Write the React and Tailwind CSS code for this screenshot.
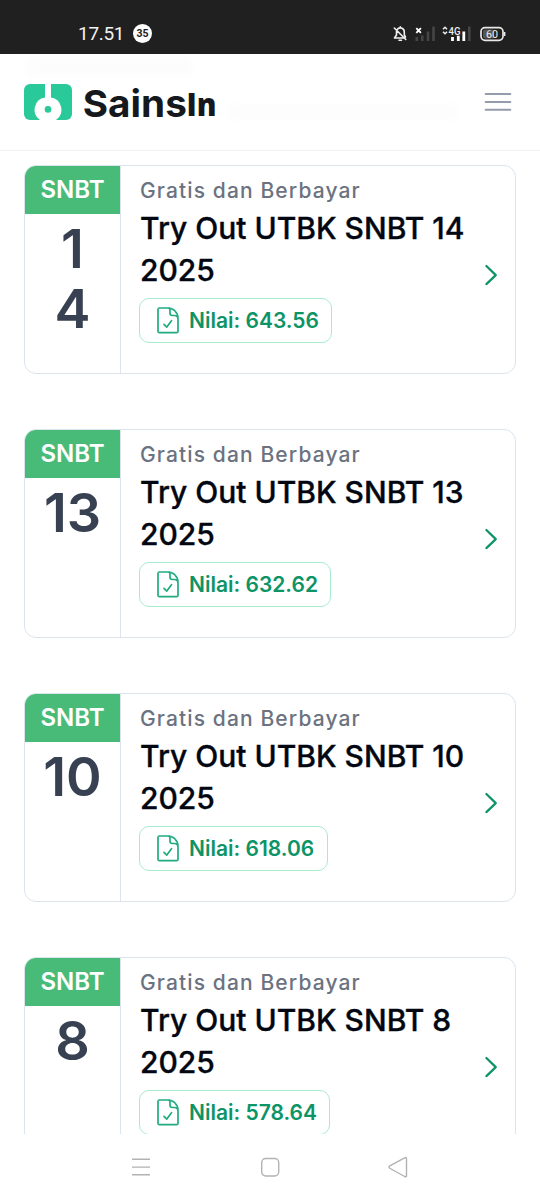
import React from 'react';

const tryouts = [
  { id: 14, digits: ['1', '4'], score: '643.56', badge: 'w-[193px]' },
  { id: 13, digits: ['13'], score: '632.62', badge: 'w-[192px]' },
  { id: 10, digits: ['10'], score: '618.06', badge: 'w-[189px]' },
  { id: 8, digits: ['8'], score: '578.64', badge: 'w-[191px]' },
];

function StatusBar() {
  return (
    <div className="flex h-[54px] shrink-0 items-start bg-[#202020] pl-[78px] text-white">
      <span className="mt-[21px] w-[55px] font-['Roboto',sans-serif] text-[19px] leading-[26px] text-[#f2f2f2] tracking-[-0.3px]">17.51</span>
      <span className="mt-[24px] flex h-[19px] w-[19px] items-center justify-center rounded-full bg-white pt-px font-['Roboto',sans-serif] text-[10.5px] font-bold leading-none text-[#202020]">35</span>
      <svg className="ml-auto mr-[34px] mt-[24px] h-5 w-[114px]" viewBox="392 24 114 20" fill="none">
        <g stroke="#f0f0f0" strokeWidth="1.6" strokeLinecap="round" strokeLinejoin="round">
          <path d="M396.5 31.5v3.5l-2 3h10.5M397.5 29.2c3-2.6 6.8-.8 6.8 2.8v3l1.2 2M400.3 26.7v.8M399 40.2h2.5M394.3 28l11.5 11.5" />
        </g>
        <path d="m416.3 28.2 4.6 4.6m0-4.6-4.6 4.6" stroke="#fff" strokeWidth="1.9" />
        <path d="M416.8 37v4M422.3 35.5V41M428 31.5V41M433.5 26.5V41" stroke="#454545" strokeWidth="2.6" />
        <path d="m443 29.3 2-2 2 2M443 31.7l2 2 2-2" stroke="#eee" strokeWidth="1.5" />
        <text x="448.5" y="35" fill="#eee" fontSize="11" fontWeight="500" fontFamily="Roboto, sans-serif" textLength="12" lengthAdjust="spacingAndGlyphs">4G</text>
        <path d="M452.5 37v4M458.3 35.8V41M463.8 31.5V41" stroke="#fff" strokeWidth="2.8" />
        <path d="M469.3 26.5V41" stroke="#454545" strokeWidth="2.6" />
        <rect x="481" y="27.7" width="22" height="12.6" rx="4" fill="#202020" stroke="#e8e8e8" strokeWidth="1.7" />
        <rect x="483" y="29.5" width="11" height="9" rx="2" fill="#555" />
        <path d="M504.6 32v4" stroke="#e8e8e8" strokeWidth="1.6" />
        <text x="486" y="37.8" fill="#eee" fontSize="10.5" fontFamily="Roboto, sans-serif" textLength="12" lengthAdjust="spacingAndGlyphs">60</text>
      </svg>
    </div>
  );
}

function Header() {
  return (
    <header className="relative flex h-[97px] shrink-0 items-start overflow-hidden border-b border-[#eff0f1] pl-6 pr-7">
      <div className="absolute left-[28px] top-[5px] h-[16px] w-[164px] bg-[#fcfcfc] blur-[4px]" />
      <div className="absolute left-[228px] top-[50px] h-[16px] w-[230px] bg-[#fdfdfd] blur-[4px]" />
      <svg className="relative mt-[30px] h-9 w-12 shrink-0" viewBox="0 0 48 36">
        <rect width="48" height="36" rx="6" fill="#29c99a" />
        <path d="M21 0h6v13.5a12.4 12.4 0 0 1 5 22.5H16a12.4 12.4 0 0 1 5-22.5z" fill="#fff" />
        <circle cx="24" cy="25.4" r="3.3" fill="#29c99a" />
      </svg>
      <svg className="relative ml-[10px] mt-[26px] h-[44px] w-[136px] shrink-0" viewBox="82 80 136 44" fill="#15191d">
        <text x="82.8" y="116.5" fontFamily="Inter, sans-serif" fontWeight="700" fontSize="37.5" textLength="104" lengthAdjust="spacingAndGlyphs">Sains</text>
        <text x="186.4" y="116.3" fontFamily="Open Sans, sans-serif" fontWeight="800" fontSize="31.5" textLength="30" lengthAdjust="spacingAndGlyphs">In</text>
      </svg>
      <svg className="ml-auto mt-[38px] h-5 w-[28px]" viewBox="0 0 28 20" stroke="#949bab" strokeWidth="2" strokeLinecap="round">
        <path d="M1.7 2h24.6M1.7 10h24.6M1.7 17.8h24.6" />
      </svg>
    </header>
  );
}

function DocumentCheck() {
  return (
    <svg className="h-[27px] w-[22px] shrink-0" viewBox="0 0 22 27" fill="none" stroke="#20ac80" strokeWidth="1.7" strokeLinecap="round" strokeLinejoin="round">
      <path d="M12.2 1H2.4Q1 1 1 2.4v21.8q0 1.4 1.4 1.4h17.2q1.4 0 1.4-1.4V11.2A10.2 10.2 0 0 0 10.8 1M12.2 1Q13 2 13 4v2.1q0 2.4 2.4 2.4h1.9q3.7 0 3.7 3.4M7 17.3l2.8 2.8 4.7-6.4" />
    </svg>
  );
}

function TryoutCard({ item }) {
  return (
    <article className="flex h-[209px] shrink-0 overflow-hidden rounded-xl border border-[#dbe4ec]">
      <div className="flex w-[96px] shrink-0 flex-col border-r border-[#dbe4ec] text-center">
        <div className="h-[48px] bg-[#48bb78] text-[24px] font-semibold leading-[48px] text-white">SNBT</div>
        <div className="pt-[5px] text-[54px] font-semibold leading-[60px] text-[#374151]">
          {item.digits.map((d) => <div key={d}>{d}</div>)}
        </div>
      </div>
      <div className="min-w-0 flex-1 pl-[19px] pt-[10px]">
        <p className="whitespace-nowrap text-[21px] font-medium leading-[30px] tracking-[1.12px] text-[#6b7280]">Gratis dan Berbayar</p>
        <h2 className="mt-px whitespace-nowrap text-[30px] font-medium leading-[42px] text-[#030712] [-webkit-text-stroke:0.35px_#030712]">
          Try Out UTBK SNBT {item.id}<br />2025
        </h2>
        <div className={`-ml-px mt-[7px] flex h-[45px] items-center rounded-[10px] border-[1.5px] border-[#a7ebce] pl-[17px] ${item.badge}`}>
          <DocumentCheck />
          <span className="ml-[10px] whitespace-nowrap text-[21px] font-semibold leading-[30px] text-[#0c9466]">Nilai: {item.score}</span>
        </div>
      </div>
      <svg className="-ml-[34px] mr-[16px] mt-[98px] h-[22px] w-[16px] shrink-0" viewBox="0 0 16 22" fill="none" stroke="#0c9466" strokeWidth="2.2" strokeLinecap="round" strokeLinejoin="round">
        <path d="m3.4 2 9.4 9.1-9.4 9" />
      </svg>
    </article>
  );
}

function NavigationBar() {
  return (
    <nav className="flex h-[66px] shrink-0 items-center justify-between bg-white pl-[131px] pr-[132px]">
      <svg className="h-6 w-5" viewBox="0 0 20 24" stroke="#b2b2b2" strokeWidth="1.4"><path d="M1 4.3h18M1 12.1h18M1 19.8h18" /></svg>
      <svg className="h-6 w-5" viewBox="0 0 20 24" fill="none" stroke="#b2b2b2" strokeWidth="1.4"><rect x="1.7" y="3.5" width="17" height="17.5" rx="4" /></svg>
      <svg className="h-6 w-5" viewBox="0 0 20 24" fill="none" stroke="#b2b2b2" strokeWidth="1.4" strokeLinejoin="round"><path d="M16.7 2.8 2.2 10.7q-2.5 1.4 0 2.8l14.5 8q1.8.8 1.8-1.1V3.9q0-1.9-1.8-1.1Z" /></svg>
    </nav>
  );
}

export default function App() {
  return (
    <div className="flex h-[1200px] w-[540px] flex-col overflow-hidden bg-white font-['Inter',sans-serif]">
      <StatusBar />
      <Header />
      <main className="flex min-h-0 flex-1 flex-col gap-[55px] overflow-hidden px-6 pt-[14px]">
        {tryouts.map((item) => <TryoutCard key={item.id} item={item} />)}
      </main>
      <NavigationBar />
    </div>
  );
}
